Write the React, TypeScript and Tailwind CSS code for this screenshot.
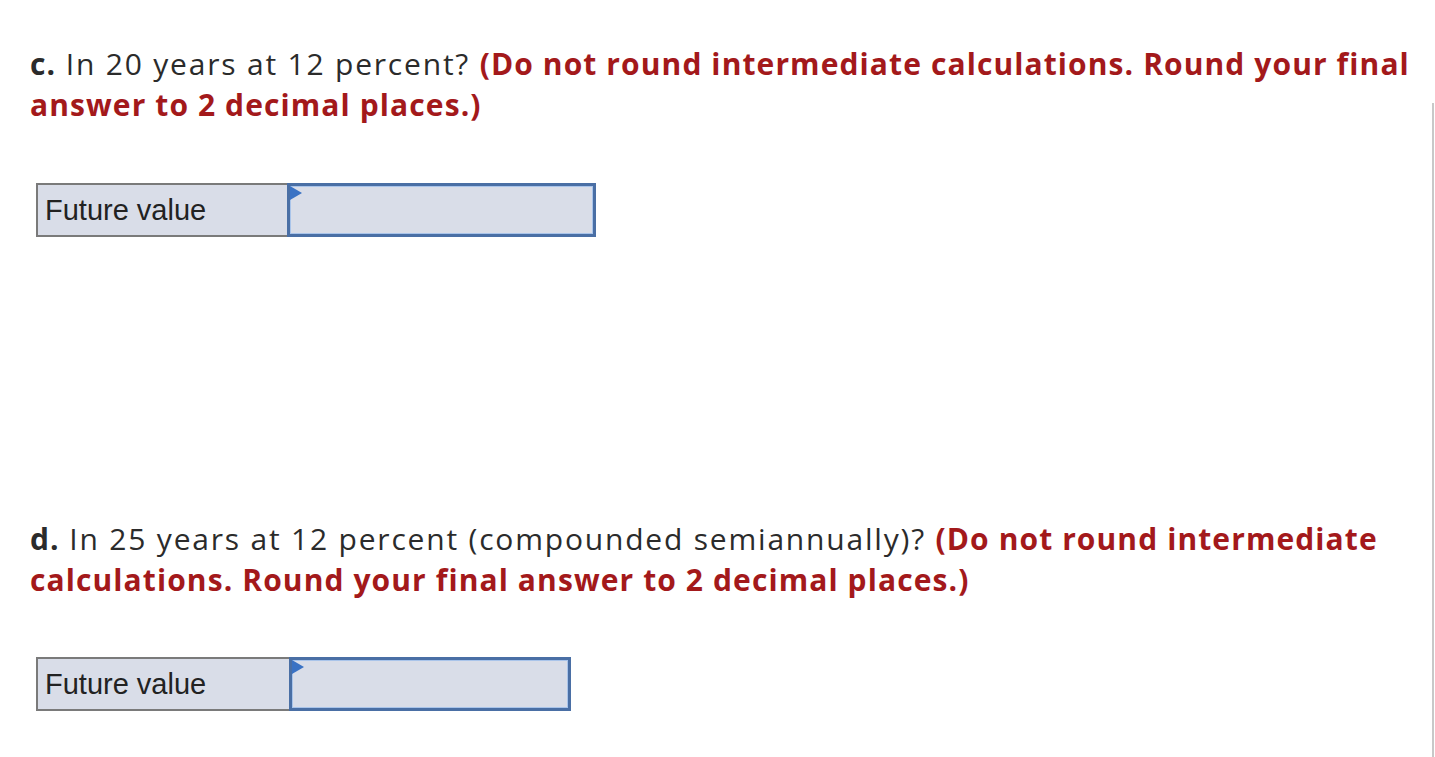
import React from 'react';

const FutureValueRow = ({ labelWidth, inputWidth }: { labelWidth: string; inputWidth: string }) => (
  <div className="flex border-2 border-[#7a7a7a] border-r-0 bg-[#d9dde8] h-[54px] w-fit">
    <div className={`${labelWidth} flex items-center pl-[7px] text-[29px] text-[#222] font-['Liberation_Sans',Arial,sans-serif]`}>
      Future value
    </div>
    <div className={`${inputWidth} relative border-[3px] border-[#4a6fa5] -my-[2px]`}>
      <div className="absolute inset-0 border border-[#a9c4ea]" />
      <div className="absolute left-0 top-0 w-0 h-0 border-y-[7px] border-y-transparent border-l-[12px] border-l-[#3a72c4]" />
    </div>
  </div>
);

export default function App() {
  return (
    <div className="flex w-[1435px] h-[757px] bg-white overflow-hidden">
      <div className="flex-1 pl-[30px] pt-[43px] font-['Open_Sans','Lato',sans-serif] text-[30px] leading-[41px] text-[#2b2b2b] tracking-[1.8px]">
        <p>
          <b className="font-bold tracking-[1.1px]">c.</b> In 20 years at 12 percent?{' '}
          <b className="font-bold text-[#a3191b] tracking-[1.1px]">
            (Do not round intermediate calculations. Round your final answer to 2 decimal places.)
          </b>
        </p>
        <div className="mt-[58px] ml-[6px] tracking-normal">
          <FutureValueRow labelWidth="w-[249px]" inputWidth="w-[309px]" />
        </div>
        <p className="mt-[281px]">
          <b className="font-bold tracking-[1.1px]">d.</b> In 25 years at 12 percent (compounded semiannually)?{' '}
          <b className="font-bold text-[#a3191b] tracking-[1.1px]">
            (Do not round intermediate calculations. Round your final answer to 2 decimal places.)
          </b>
        </p>
        <div className="mt-[57px] ml-[6px] tracking-normal">
          <FutureValueRow labelWidth="w-[251px]" inputWidth="w-[282px]" />
        </div>
      </div>
      <div className="w-[3px] flex flex-col">
        <div className="h-[103px]" />
        <div className="flex-1 border-l-2 border-[#c8c8c8]" />
      </div>
    </div>
  );
}
